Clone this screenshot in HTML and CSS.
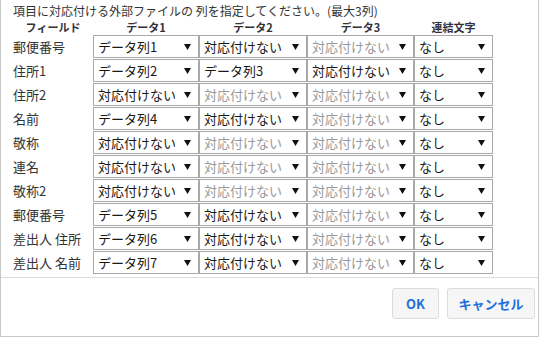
FILE: index.html
```html
<!DOCTYPE html>
<html lang="ja">
<head>
  <meta charset="UTF-8">
  <title>外部ファイル列の指定</title>
  <link rel="stylesheet" href="styles.css">
</head>
<body>

  <div class="dialog">
    <div class="dialog-body">
      <p class="intro">項目に対応付ける外部ファイルの 列を指定してください。(最大3列)</p>

      <div class="map-head">
        <div class="head">フィールド</div>
        <div class="head">データ1</div>
        <div class="head">データ2</div>
        <div class="head">データ3</div>
        <div class="head">連結文字</div>
      </div>

      <div class="map-grid">
        <div class="label">郵便番号</div>
        <div class="sel"><span>データ列1</span><svg width="7" height="6"><polygon points="0,0 7,0 3.5,6"/></svg></div>
        <div class="sel"><span>対応付けない</span><svg width="7" height="6"><polygon points="0,0 7,0 3.5,6"/></svg></div>
        <div class="sel off"><span>対応付けない</span><svg width="7" height="6"><polygon points="0,0 7,0 3.5,6"/></svg></div>
        <div class="sel"><span>なし</span><svg width="7" height="6"><polygon points="0,0 7,0 3.5,6"/></svg></div>

        <div class="label">住所1</div>
        <div class="sel"><span>データ列2</span><svg width="7" height="6"><polygon points="0,0 7,0 3.5,6"/></svg></div>
        <div class="sel"><span>データ列3</span><svg width="7" height="6"><polygon points="0,0 7,0 3.5,6"/></svg></div>
        <div class="sel"><span>対応付けない</span><svg width="7" height="6"><polygon points="0,0 7,0 3.5,6"/></svg></div>
        <div class="sel"><span>なし</span><svg width="7" height="6"><polygon points="0,0 7,0 3.5,6"/></svg></div>

        <div class="label">住所2</div>
        <div class="sel"><span>対応付けない</span><svg width="7" height="6"><polygon points="0,0 7,0 3.5,6"/></svg></div>
        <div class="sel off"><span>対応付けない</span><svg width="7" height="6"><polygon points="0,0 7,0 3.5,6"/></svg></div>
        <div class="sel off"><span>対応付けない</span><svg width="7" height="6"><polygon points="0,0 7,0 3.5,6"/></svg></div>
        <div class="sel"><span>なし</span><svg width="7" height="6"><polygon points="0,0 7,0 3.5,6"/></svg></div>

        <div class="label">名前</div>
        <div class="sel"><span>データ列4</span><svg width="7" height="6"><polygon points="0,0 7,0 3.5,6"/></svg></div>
        <div class="sel"><span>対応付けない</span><svg width="7" height="6"><polygon points="0,0 7,0 3.5,6"/></svg></div>
        <div class="sel off"><span>対応付けない</span><svg width="7" height="6"><polygon points="0,0 7,0 3.5,6"/></svg></div>
        <div class="sel"><span>なし</span><svg width="7" height="6"><polygon points="0,0 7,0 3.5,6"/></svg></div>

        <div class="label">敬称</div>
        <div class="sel"><span>対応付けない</span><svg width="7" height="6"><polygon points="0,0 7,0 3.5,6"/></svg></div>
        <div class="sel off"><span>対応付けない</span><svg width="7" height="6"><polygon points="0,0 7,0 3.5,6"/></svg></div>
        <div class="sel off"><span>対応付けない</span><svg width="7" height="6"><polygon points="0,0 7,0 3.5,6"/></svg></div>
        <div class="sel"><span>なし</span><svg width="7" height="6"><polygon points="0,0 7,0 3.5,6"/></svg></div>

        <div class="label">連名</div>
        <div class="sel"><span>対応付けない</span><svg width="7" height="6"><polygon points="0,0 7,0 3.5,6"/></svg></div>
        <div class="sel off"><span>対応付けない</span><svg width="7" height="6"><polygon points="0,0 7,0 3.5,6"/></svg></div>
        <div class="sel off"><span>対応付けない</span><svg width="7" height="6"><polygon points="0,0 7,0 3.5,6"/></svg></div>
        <div class="sel"><span>なし</span><svg width="7" height="6"><polygon points="0,0 7,0 3.5,6"/></svg></div>

        <div class="label">敬称2</div>
        <div class="sel"><span>対応付けない</span><svg width="7" height="6"><polygon points="0,0 7,0 3.5,6"/></svg></div>
        <div class="sel off"><span>対応付けない</span><svg width="7" height="6"><polygon points="0,0 7,0 3.5,6"/></svg></div>
        <div class="sel off"><span>対応付けない</span><svg width="7" height="6"><polygon points="0,0 7,0 3.5,6"/></svg></div>
        <div class="sel"><span>なし</span><svg width="7" height="6"><polygon points="0,0 7,0 3.5,6"/></svg></div>

        <div class="label">郵便番号</div>
        <div class="sel"><span>データ列5</span><svg width="7" height="6"><polygon points="0,0 7,0 3.5,6"/></svg></div>
        <div class="sel"><span>対応付けない</span><svg width="7" height="6"><polygon points="0,0 7,0 3.5,6"/></svg></div>
        <div class="sel off"><span>対応付けない</span><svg width="7" height="6"><polygon points="0,0 7,0 3.5,6"/></svg></div>
        <div class="sel"><span>なし</span><svg width="7" height="6"><polygon points="0,0 7,0 3.5,6"/></svg></div>

        <div class="label">差出人 住所</div>
        <div class="sel"><span>データ列6</span><svg width="7" height="6"><polygon points="0,0 7,0 3.5,6"/></svg></div>
        <div class="sel"><span>対応付けない</span><svg width="7" height="6"><polygon points="0,0 7,0 3.5,6"/></svg></div>
        <div class="sel off"><span>対応付けない</span><svg width="7" height="6"><polygon points="0,0 7,0 3.5,6"/></svg></div>
        <div class="sel"><span>なし</span><svg width="7" height="6"><polygon points="0,0 7,0 3.5,6"/></svg></div>

        <div class="label">差出人 名前</div>
        <div class="sel"><span>データ列7</span><svg width="7" height="6"><polygon points="0,0 7,0 3.5,6"/></svg></div>
        <div class="sel"><span>対応付けない</span><svg width="7" height="6"><polygon points="0,0 7,0 3.5,6"/></svg></div>
        <div class="sel off"><span>対応付けない</span><svg width="7" height="6"><polygon points="0,0 7,0 3.5,6"/></svg></div>
        <div class="sel"><span>なし</span><svg width="7" height="6"><polygon points="0,0 7,0 3.5,6"/></svg></div>
      </div>
    </div>

    <div class="dialog-footer">
      <button class="btn ok">OK</button>
      <button class="btn cancel">キャンセル</button>
    </div>
  </div>

</body>
</html>
```

FILE: styles.css
```css
body {
  margin: 0;
  padding: 0;
  background: #ffffff;
  font-family: "Noto Sans CJK JP", "Noto Sans", sans-serif;
  color: #333;
}

.dialog {
  box-sizing: border-box;
  width: 539px;
  height: 337px;
  border: 1px solid #c8c8c8;
  border-top: none;
  display: flex;
  flex-direction: column;
}

.dialog-body {
  flex: 1;
  padding: 3px 0 0 12px;
}

.intro {
  margin: 0;
  font-size: 12px;
  line-height: 16px;
  color: #333;
}

.map-head,
.map-grid {
  display: grid;
  grid-template-columns: 80px 106px 108px 107px 79px;
}

.map-head {
  height: 16px;
}

.map-grid {
  grid-template-rows: repeat(10, 23px);
  row-gap: 1px;
}

.head {
  text-align: center;
  font-size: 11px;
  font-weight: bold;
  line-height: 16px;
  color: #33303a;
}

.label {
  display: flex;
  align-items: center;
  font-size: 13px;
  color: #333;
}

.sel {
  box-sizing: border-box;
  display: flex;
  align-items: center;
  justify-content: space-between;
  padding: 0 7px 0 4px;
  border: 1px solid #a9a9a9;
  font-size: 13px;
  color: #1a1a1a;
  background: #fff;
}

.sel.off {
  color: #999;
}

.sel svg {
  fill: #111;
  flex-shrink: 0;
}

.dialog-footer {
  height: 48px;
  border-top: 1px solid #dcdcdc;
  display: flex;
  justify-content: flex-end;
  align-items: flex-start;
  gap: 8px;
  padding: 10px 3px 0 0;
}

.btn {
  height: 31px;
  border: 1px solid #dcdcdc;
  border-radius: 3px;
  background: #f6f6f6;
  color: #1f6fdc;
  font-family: "Noto Sans CJK JP", "Noto Sans", sans-serif;
  font-size: 13px;
  font-weight: bold;
  padding: 0;
}

.btn.ok {
  width: 47px;
}

.btn.cancel {
  width: 88px;
}
```
